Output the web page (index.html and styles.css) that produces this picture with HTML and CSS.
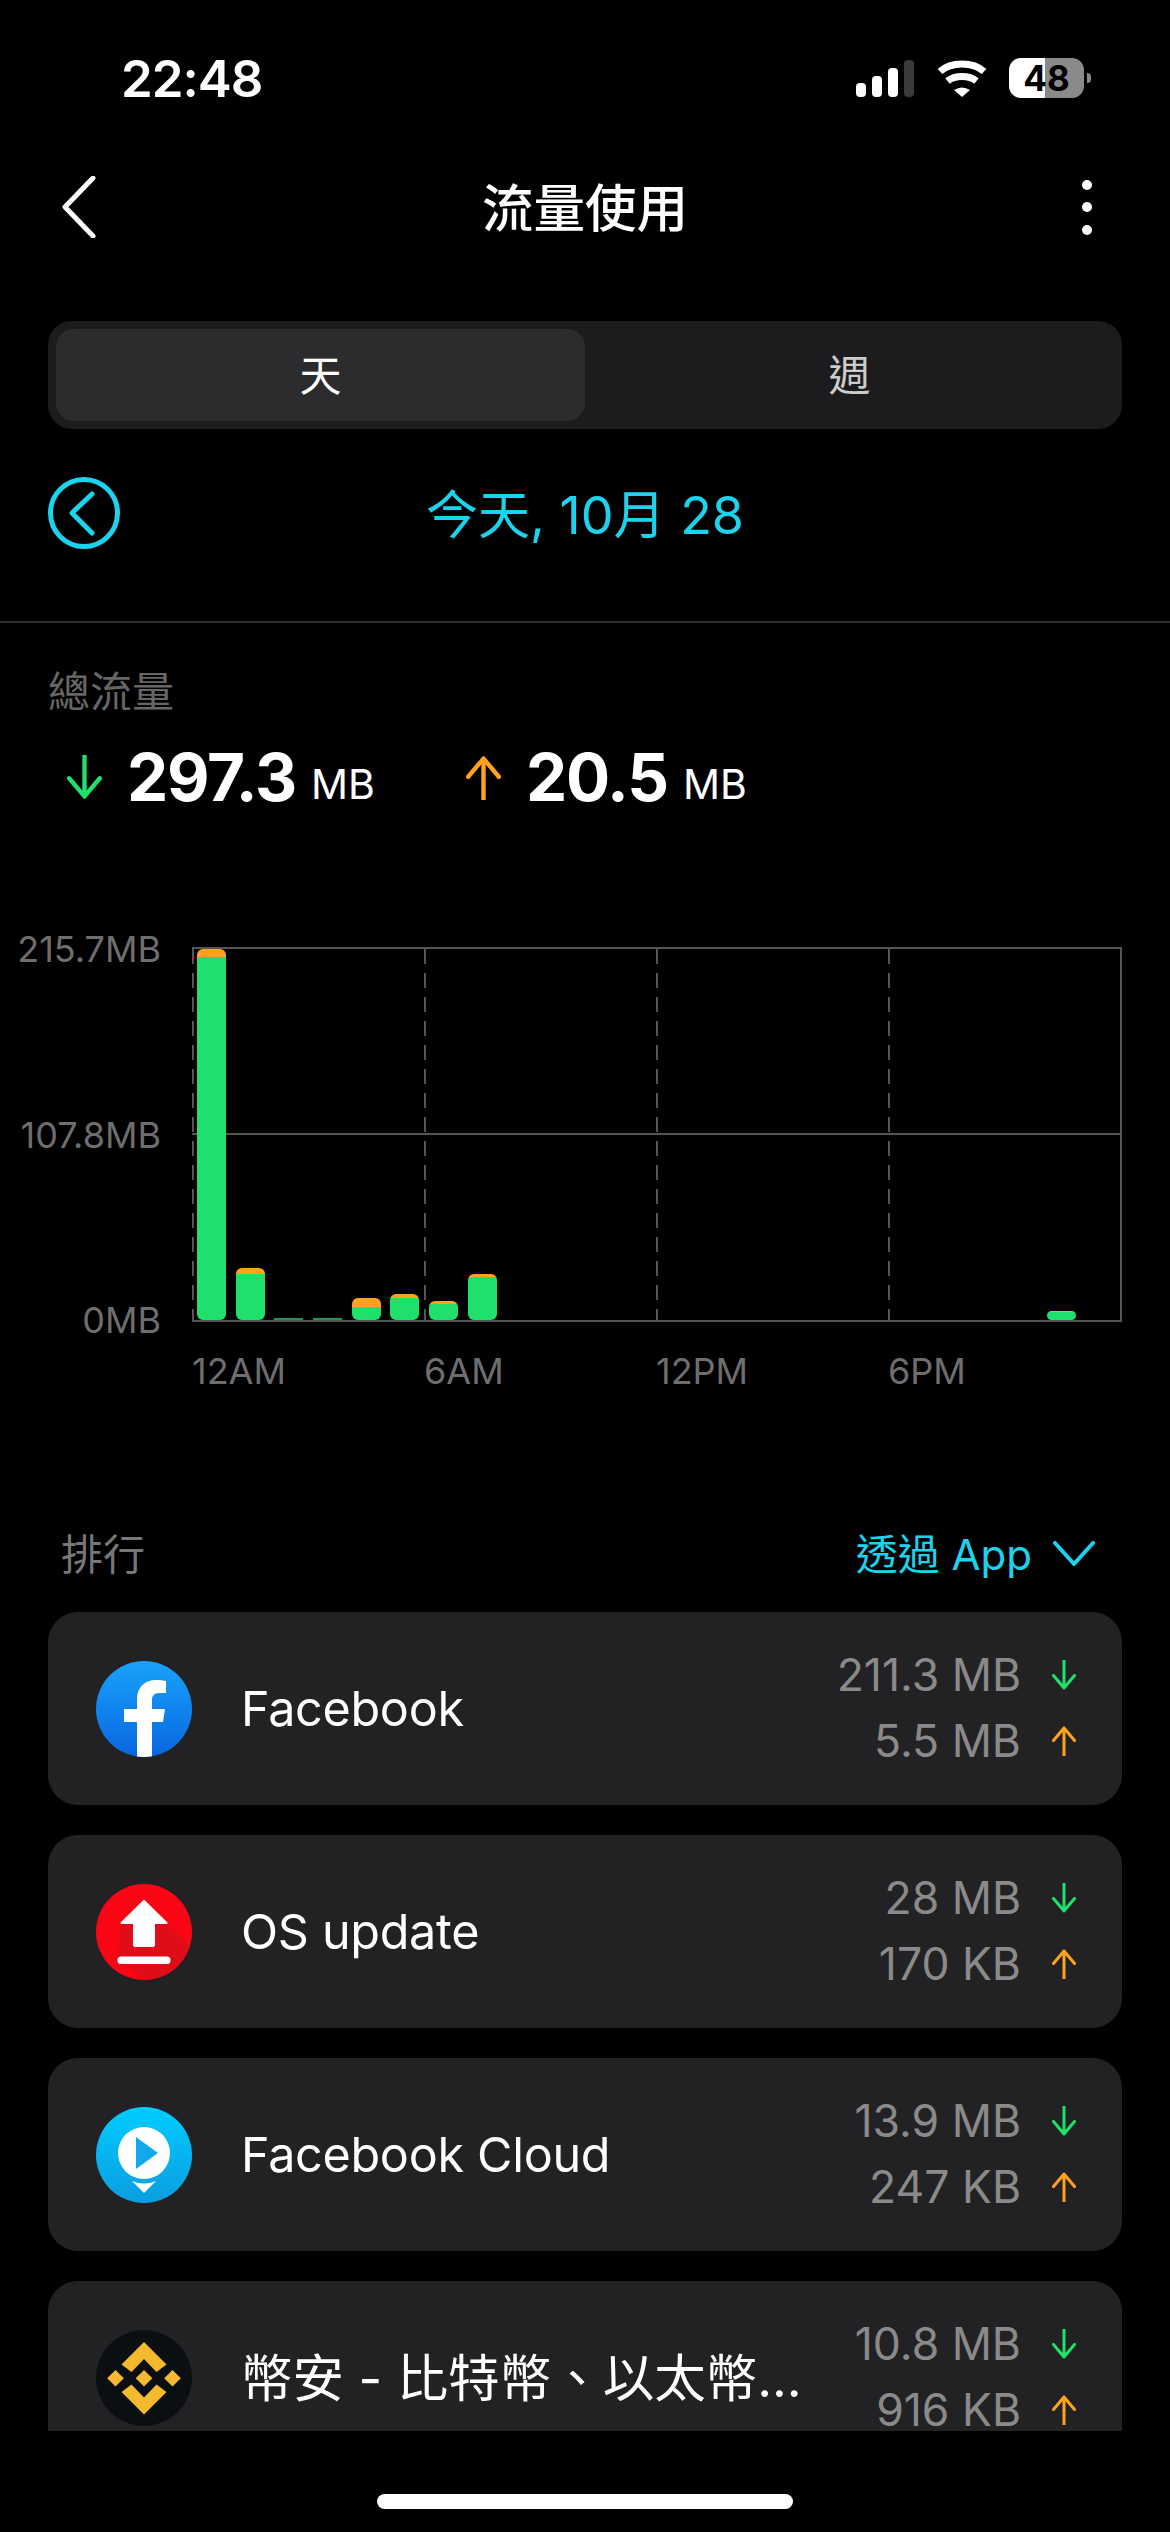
FILE: index.html
```html
<!DOCTYPE html>
<html lang="zh-Hant">
<head>
    <meta charset="UTF-8">
    <meta name="viewport" content="width=device-width, initial-scale=1.0">
    <title>流量使用</title>
    <link rel="stylesheet" href="styles.css">
</head>
<body>

<svg class="defs" width="0" height="0">
    <symbol id="arrowDown" viewBox="0 0 24 30">
        <path d="M12 0V28M1.5 15.5L12 28L22.5 15.5" fill="none" stroke="#1fe06a" stroke-width="3" stroke-linecap="round" stroke-linejoin="round"/>
    </symbol>
    <symbol id="arrowUp" viewBox="0 0 24 30">
        <path d="M12 30V2M1.5 14.5L12 2L22.5 14.5" fill="none" stroke="#ffa31f" stroke-width="3" stroke-linecap="round" stroke-linejoin="round"/>
    </symbol>
</svg>

<div class="status">
    <div class="time">22:48</div>
    <div class="signal">
        <span class="sig sig1"></span>
        <span class="sig sig2"></span>
        <span class="sig sig3"></span>
        <span class="sig sig4"></span>
    </div>
    <svg class="wifi" viewBox="0 0 50 37">
        <path d="M3 11.5C14 1.5 36 1.5 47 11.5M10.5 21C18 15 32 15 39.5 21" fill="none" stroke="#fff" stroke-width="7"/>
        <path d="M17 30Q25 25 33 30L25 37Z" fill="#fff"/>
    </svg>
    <div class="battery"><span class="battery-num">48</span></div>
    <div class="battery-nub"></div>
</div>

<div class="topbar">
    <svg class="back" viewBox="0 0 34 62">
        <path d="M31 2L3 31L31 60" fill="none" stroke="#fff" stroke-width="5" stroke-linecap="round" stroke-linejoin="round"/>
    </svg>
    <h1 class="title">流量使用</h1>
    <div class="dots"><span></span><span></span><span></span></div>
</div>

<div class="segment">
    <div class="seg-item seg-on">天</div>
    <div class="seg-item">週</div>
</div>

<div class="date-row">
    <svg class="date-prev" viewBox="0 0 72 72">
        <circle cx="36" cy="36" r="33.5" fill="none" stroke="#1cd3ee" stroke-width="5"/>
        <path d="M44 17L24 36L44 56" fill="none" stroke="#1cd3ee" stroke-width="5" stroke-linecap="round" stroke-linejoin="round"/>
    </svg>
    <div class="date-text">今天, 10月 28</div>
</div>

<div class="divider"></div>

<div class="totals">
    <div class="totals-label">總流量</div>
    <div class="totals-row">
        <svg class="arrow-big"><use href="#arrowDown"/></svg>
        <span class="big-num">297.3</span>
        <span class="big-unit">MB</span>
        <svg class="arrow-big arrow-up-big"><use href="#arrowUp"/></svg>
        <span class="big-num">20.5</span>
        <span class="big-unit">MB</span>
    </div>
</div>

<div class="chart">
    <div class="y-labels">
        <span>215.7MB</span>
        <span>107.8MB</span>
        <span>0MB</span>
    </div>
    <div class="chart-main">
        <div class="plot">
            <div class="plot-col"></div>
            <div class="plot-col"></div>
            <div class="plot-col"></div>
            <div class="plot-col"></div>
            <div class="bars">
                <div class="bar" style="height:371px"><i class="bar-up" style="height:8px"></i><i class="bar-down"></i></div>
                <div class="bar" style="height:52px"><i class="bar-up" style="height:6px"></i><i class="bar-down"></i></div>
                <div class="bar bar-thin" style="height:2px"></div>
                <div class="bar bar-thin" style="height:2px"></div>
                <div class="bar" style="height:22px"><i class="bar-up" style="height:9px"></i><i class="bar-down"></i></div>
                <div class="bar" style="height:26px"><i class="bar-up" style="height:4px"></i><i class="bar-down"></i></div>
                <div class="bar" style="height:19px"><i class="bar-up" style="height:3px"></i><i class="bar-down"></i></div>
                <div class="bar" style="height:46px"><i class="bar-up" style="height:3px"></i><i class="bar-down"></i></div>
                <div class="bar bar-late" style="height:9px"><i class="bar-up" style="height:1px"></i><i class="bar-down"></i></div>
            </div>
        </div>
        <div class="x-labels">
            <span>12AM</span>
            <span>6AM</span>
            <span>12PM</span>
            <span>6PM</span>
        </div>
    </div>
</div>

<div class="rank-head">
    <div class="rank-title">排行</div>
    <div class="rank-filter">透過 App</div>
    <svg class="rank-chevron" viewBox="0 0 42 25">
        <path d="M2 2L21 23L40 2" fill="none" stroke="#1cd3ee" stroke-width="4" stroke-linecap="round" stroke-linejoin="round"/>
    </svg>
</div>

<div class="list">
    <div class="card">
        <svg class="app-icon" viewBox="0 0 96 96">
            <defs>
                <linearGradient id="fbGrad" x1="0" y1="0" x2="0" y2="1">
                    <stop offset="0" stop-color="#18a3fb"/>
                    <stop offset="1" stop-color="#0866e0"/>
                </linearGradient>
                <clipPath id="iconClip"><circle cx="48" cy="48" r="48"/></clipPath>
            </defs>
            <circle cx="48" cy="48" r="48" fill="url(#fbGrad)"/>
            <path clip-path="url(#iconClip)" d="M41 96V61H28V48H41V38C41 26 49 19 60 19C64 19 68 19.500 70 20V32H63C58 32 56 35 56 39V48H69L67 61H56V96Z" fill="#fff"/>
        </svg>
        <div class="app-name">Facebook</div>
        <div class="usage">
            <div class="usage-row"><span>211.3 MB</span><svg class="arrow-small"><use href="#arrowDown"/></svg></div>
            <div class="usage-row"><span>5.5 MB</span><svg class="arrow-small"><use href="#arrowUp"/></svg></div>
        </div>
    </div>

    <div class="card">
        <svg class="app-icon" viewBox="0 0 96 96">
            <circle cx="48" cy="48" r="48" fill="#f90514"/>
            <path clip-path="url(#iconClip)" d="M25 39L71 39L100 68V100H54L22 75Z" fill="#e00c17"/>
            <path d="M48 15.500L71.500 38.500Q72 40 70 40H59V61Q59 63 57 63H39Q37 63 37 61V40H26Q24 40 24.500 38.500Z" fill="#fff"/>
            <rect x="21.500" y="72.500" width="53" height="7.500" rx="3.500" fill="#fff"/>
        </svg>
        <div class="app-name">OS update</div>
        <div class="usage">
            <div class="usage-row"><span>28 MB</span><svg class="arrow-small"><use href="#arrowDown"/></svg></div>
            <div class="usage-row"><span>170 KB</span><svg class="arrow-small"><use href="#arrowUp"/></svg></div>
        </div>
    </div>

    <div class="card">
        <svg class="app-icon" viewBox="0 0 96 96">
            <defs>
                <linearGradient id="cloudGrad" x1="0" y1="0" x2="0" y2="1">
                    <stop offset="0" stop-color="#00ccff"/>
                    <stop offset="1" stop-color="#0b9de0"/>
                </linearGradient>
            </defs>
            <circle cx="48" cy="48" r="48" fill="url(#cloudGrad)"/>
            <circle cx="48" cy="46" r="26" fill="#fff"/>
            <path d="M40 30L62 46L40 62Z" fill="#12a8ee"/>
            <path d="M36 74Q48 79 60 74L48 86Z" fill="#fff"/>
        </svg>
        <div class="app-name">Facebook Cloud</div>
        <div class="usage">
            <div class="usage-row"><span>13.9 MB</span><svg class="arrow-small"><use href="#arrowDown"/></svg></div>
            <div class="usage-row"><span>247 KB</span><svg class="arrow-small"><use href="#arrowUp"/></svg></div>
        </div>
    </div>

    <div class="card">
        <svg class="app-icon" viewBox="0 0 96 96">
            <circle cx="48" cy="48" r="48" fill="#0c0f12"/>
            <path d="M48 12L70.500 34.500L60.500 42L48 29L35.500 42L25.500 34.500Z" fill="#f3ba2f"/>
            <path d="M48 84.500L70.500 62L60.500 54.500L48 67.500L35.500 54.500L25.500 62Z" fill="#f3ba2f"/>
            <path d="M48 40L56.300 48.300L48 56.600L39.700 48.300Z" fill="#f3ba2f"/>
            <path d="M19.500 40L27.800 48.300L19.500 56.600L11.200 48.300Z" fill="#f3ba2f"/>
            <path d="M76.500 40L84.800 48.300L76.500 56.600L68.200 48.300Z" fill="#f3ba2f"/>
        </svg>
        <div class="app-name app-name-cjk">幣安 - 比特幣、以太幣...</div>
        <div class="usage">
            <div class="usage-row"><span>10.8 MB</span><svg class="arrow-small"><use href="#arrowDown"/></svg></div>
            <div class="usage-row"><span>916 KB</span><svg class="arrow-small"><use href="#arrowUp"/></svg></div>
        </div>
    </div>
</div>

<div class="home-bar"></div>

</body>
</html>
```

FILE: styles.css
```css
html, body {
    margin: 0;
    padding: 0;
}
body {
    width: 1170px;
    height: 2532px;
    overflow: hidden;
    background-color: #000;
    color: #fff;
    font-family: Inter, "Noto Sans CJK TC", sans-serif;
}
.defs {
    position: absolute;
}

/* status bar */
.status {
    height: 156px;
    display: flex;
    align-items: center;
    padding: 0 79px 0 121px;
    box-sizing: border-box;
}
.time {
    font-size: 51px;
    font-weight: 600;
    letter-spacing: -1px;
    margin-right: auto;
}
.signal {
    display: flex;
    align-items: flex-end;
    gap: 6px;
    height: 37px;
    margin-right: 23px;
}
.sig {
    width: 10px;
    background-color: #fff;
    border-radius: 4px;
}
.sig1 { height: 14px; }
.sig2 { height: 21px; }
.sig3 { height: 29px; }
.sig4 { height: 37px; background-color: #3a3a3a; }
.wifi {
    width: 50px;
    height: 37px;
    margin-right: 22px;
}
.battery {
    width: 75px;
    height: 40px;
    border-radius: 12px;
    background: linear-gradient(to right, #fff 0 36px, #8a8a8a 36px);
    display: flex;
    align-items: center;
    justify-content: center;
}
.battery-num {
    color: #000;
    font-size: 35px;
    font-weight: 700;
}
.battery-nub {
    width: 4px;
    height: 10px;
    margin-left: 3px;
    background-color: #8a8a8a;
    border-radius: 0 5px 5px 0;
}

/* title */
.topbar {
    height: 102px;
    display: flex;
    align-items: center;
    justify-content: space-between;
    padding: 0 78px 0 62px;
}
.back {
    width: 34px;
    height: 62px;
}
.title {
    margin: 0 0 5px;
    font-size: 51.500px;
    font-weight: 500;
    transform: translateX(-4px);
}
.dots {
    display: flex;
    flex-direction: column;
    gap: 12.500px;
}
.dots span {
    width: 10px;
    height: 10px;
    border-radius: 50%;
    background-color: #fff;
}

/* day / week switch */
.segment {
    margin: 63px 48px 0;
    height: 108px;
    padding: 8px;
    box-sizing: border-box;
    background-color: #1c1c1e;
    border-radius: 24px;
    display: flex;
}
.seg-item {
    flex: 1;
    display: flex;
    align-items: center;
    justify-content: center;
    padding-bottom: 5px;
    font-size: 42px;
    color: #ccc;
    border-radius: 18px;
}
.seg-on {
    background-color: #2c2c2e;
    color: #fff;
}

.date-row {
    margin: 48px 48px 0;
    height: 72px;
    display: flex;
    align-items: center;
    position: relative;
}
.date-prev {
    width: 72px;
    height: 72px;
}
.date-text {
    flex: 1;
    padding: 0 72px 3px 0;
    text-align: center;
    color: #1cd3ee;
    font-size: 52px;
}
.divider {
    margin-top: 72px;
    height: 2px;
    background-color: #2e2e2e;
}

/* totals */
.totals {
    padding: 44px 0 0 48px;
}
.totals-label {
    height: 50px;
    line-height: 50px;
    font-size: 42px;
    color: #666;
}
.totals-row {
    margin-top: 30px;
    height: 60px;
    display: flex;
    align-items: center;
}
.arrow-big {
    width: 35px;
    height: 45px;
    margin-left: 19px;
    margin-right: 25px;
}
.arrow-up-big {
    margin-left: 0;
    margin-right: 25px;
}
.big-num {
    font-size: 65.500px;
    font-weight: 700;
    letter-spacing: -1.200px;
}
.big-unit {
    font-size: 41px;
    margin: 14px 91px 0 15px;
}

/* chart */
.chart {
    margin-top: 140px;
    display: flex;
    align-items: flex-start;
}
.y-labels {
    width: 161px;
    height: 411px;
    margin-top: -18px;
    margin-right: 31px;
    display: flex;
    flex-direction: column;
    justify-content: space-between;
    align-items: flex-end;
    font-size: 36px;
    line-height: 40px;
    color: #6e6e6e;
}
.chart-main {
    width: 930px;
}
.plot {
    position: relative;
    height: 371px;
    border-top: 2px solid #555;
    border-bottom: 2px solid #555;
    border-right: 2px solid #555;
    box-sizing: content-box;
    display: flex;
}
.plot::before {
    content: "";
    position: absolute;
    left: 0;
    right: 0;
    top: 184px;
    height: 2px;
    background-color: #555;
}
.plot-col {
    flex: 1;
    background-image: repeating-linear-gradient(to bottom, #555 0 15px, transparent 15px 24px);
    background-size: 2px 100%;
    background-repeat: no-repeat;
}
.bars {
    position: absolute;
    left: 5px;
    right: 0;
    top: 0;
    bottom: 0;
    display: grid;
    grid-template-columns: repeat(24, 38.67px);
    align-items: end;
}
.bar {
    width: 29px;
    display: flex;
    flex-direction: column;
    border-radius: 6px;
    overflow: hidden;
}
.bar-up {
    display: block;
    background-color: #ffa31f;
}
.bar-down {
    display: block;
    flex: 1;
    background-color: #1fe06a;
}
.bar-thin {
    background-color: #1a9a52;
    border-radius: 0;
}
.bar-late {
    grid-column: 23;
}
.x-labels {
    margin-top: 29px;
    display: grid;
    grid-template-columns: repeat(4, 232px);
    font-size: 36px;
    line-height: 40px;
    color: #6e6e6e;
}

/* ranking */
.rank-head {
    margin-top: 132px;
    height: 60px;
    padding: 0 75px 0 61px;
    display: flex;
    align-items: center;
}
.rank-title {
    font-size: 42px;
    color: #777;
    margin-right: auto;
    padding-bottom: 3px;
}
.rank-filter {
    font-size: 42px;
    color: #1cd3ee;
    margin-right: 21px;
    padding-bottom: 3px;
}
.rank-chevron {
    width: 42px;
    height: 25px;
}
.list {
    margin: 29px 48px 0;
    height: 819px;
    overflow: hidden;
    display: flex;
    flex-direction: column;
    gap: 30px;
}
.card {
    flex: none;
    height: 193px;
    padding: 0 46px 0 48px;
    box-sizing: border-box;
    background-color: #222224;
    border-radius: 30px;
    display: flex;
    align-items: center;
}
.app-icon {
    width: 96px;
    height: 96px;
    margin-right: 49px;
}
.app-name {
    flex: 1;
    font-size: 48.500px;
    letter-spacing: -0.300px;
    white-space: nowrap;
}
.app-name-cjk {
    font-size: 51.500px;
    letter-spacing: 0;
    padding-bottom: 6px;
}
.usage {
    display: flex;
    flex-direction: column;
    gap: 12px;
    align-items: flex-end;
    padding-bottom: 2px;
    font-size: 44.500px;
    color: #8a8a8a;
}
.usage-row {
    height: 54px;
    display: flex;
    align-items: center;
}
.arrow-small {
    width: 24px;
    height: 30px;
    margin-left: 31px;
}
.home-bar {
    margin: 63px auto 0;
    width: 416px;
    height: 15px;
    border-radius: 8px;
    background-color: #fff;
}
```
